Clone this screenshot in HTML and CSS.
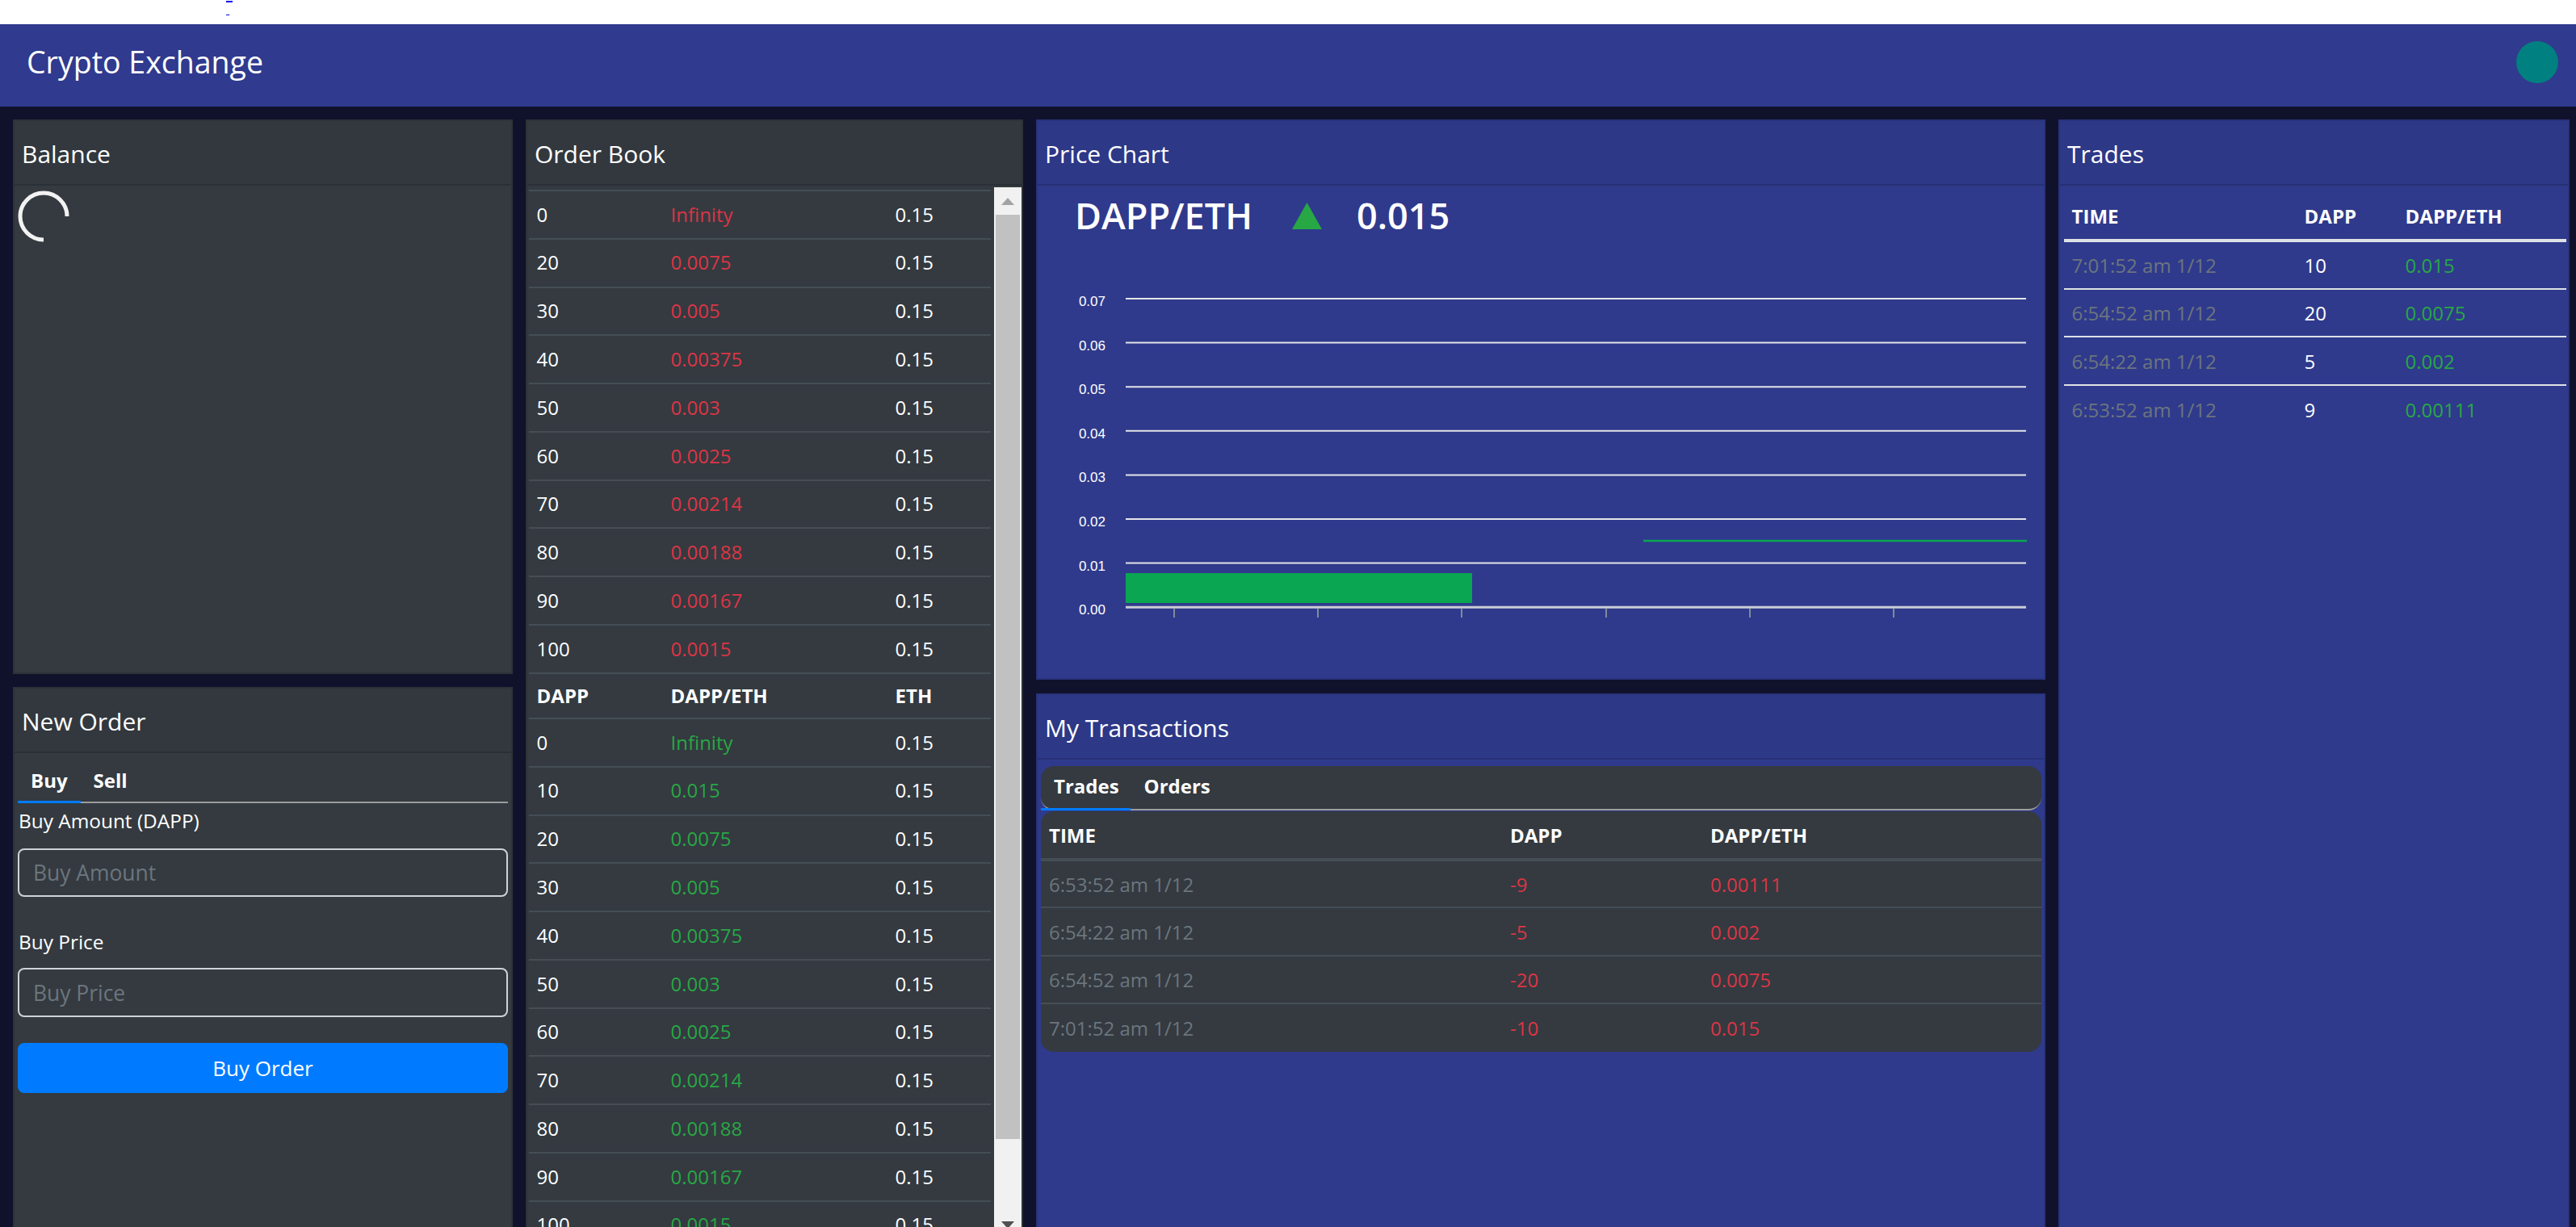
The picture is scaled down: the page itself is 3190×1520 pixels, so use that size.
FILE: index.html
```html
<!DOCTYPE html>
<html lang="en">
<head>
<meta charset="utf-8">
<title>Crypto Exchange</title>
<link rel="stylesheet" href="styles.css">
</head>
<body>
<div class="topbar"><a class="toplink" href="#">&nbsp;</a></div>
<nav class="navbar">
  <span class="brand">Crypto Exchange</span>
  <span class="avatar"></span>
</nav>
<main class="content">
  <div class="stack stack-left">
    <section class="card card-dark balance">
      <div class="card-header">Balance</div>
      <div class="card-body balance-body">
        <svg class="spinner" width="64" height="64" viewBox="0 0 64 64"><path d="M61 32 A29 29 0 1 0 32 61" fill="none" stroke="#f2f2f2" stroke-width="5"/></svg>
      </div>
    </section>
    <section class="card card-dark new-order">
      <div class="card-header">New Order</div>
      <div class="card-body order-body">
        <div class="order-tabs">
          <span class="order-tab active">Buy</span>
          <span class="order-tab">Sell</span>
        </div>
        <label class="field-label label-first">Buy Amount (DAPP)</label>
        <input class="field field-first" type="text" placeholder="Buy Amount">
        <label class="field-label label-second">Buy Price</label>
        <input class="field field-second" type="text" placeholder="Buy Price">
        <button class="btn-buy" type="button">Buy Order</button>
      </div>
    </section>
  </div>

  <section class="card card-dark order-book">
    <div class="card-header">Order Book</div>
    <div class="card-body book-body">
      <div class="book-scroll">
        <table class="book-table">
          <colgroup><col class="bc1"><col class="bc2"><col class="bc3"></colgroup>
          <tbody>
            <tr><td>0</td><td class="red">Infinity</td><td>0.15</td></tr>
            <tr><td>20</td><td class="red">0.0075</td><td>0.15</td></tr>
            <tr><td>30</td><td class="red">0.005</td><td>0.15</td></tr>
            <tr><td>40</td><td class="red">0.00375</td><td>0.15</td></tr>
            <tr><td>50</td><td class="red">0.003</td><td>0.15</td></tr>
            <tr><td>60</td><td class="red">0.0025</td><td>0.15</td></tr>
            <tr><td>70</td><td class="red">0.00214</td><td>0.15</td></tr>
            <tr><td>80</td><td class="red">0.00188</td><td>0.15</td></tr>
            <tr><td>90</td><td class="red">0.00167</td><td>0.15</td></tr>
            <tr><td>100</td><td class="red">0.0015</td><td>0.15</td></tr>
            <tr class="book-head"><th>DAPP</th><th>DAPP/ETH</th><th>ETH</th></tr>
            <tr><td>0</td><td class="green">Infinity</td><td>0.15</td></tr>
            <tr><td>10</td><td class="green">0.015</td><td>0.15</td></tr>
            <tr><td>20</td><td class="green">0.0075</td><td>0.15</td></tr>
            <tr><td>30</td><td class="green">0.005</td><td>0.15</td></tr>
            <tr><td>40</td><td class="green">0.00375</td><td>0.15</td></tr>
            <tr><td>50</td><td class="green">0.003</td><td>0.15</td></tr>
            <tr><td>60</td><td class="green">0.0025</td><td>0.15</td></tr>
            <tr><td>70</td><td class="green">0.00214</td><td>0.15</td></tr>
            <tr><td>80</td><td class="green">0.00188</td><td>0.15</td></tr>
            <tr><td>90</td><td class="green">0.00167</td><td>0.15</td></tr>
            <tr><td>100</td><td class="green">0.0015</td><td>0.15</td></tr>
          </tbody>
        </table>
      </div>
      <div class="scrollbar">
        <div class="sb-btn"><svg width="16" height="9" viewBox="0 0 16 9"><path d="M8 0 L16 9 L0 9 Z" fill="#a3a3a3"/></svg></div>
        <div class="sb-thumb"></div>
        <div class="sb-track"></div>
        <div class="sb-btn"><svg width="16" height="9" viewBox="0 0 16 9"><path d="M0 0 L16 0 L8 9 Z" fill="#505050"/></svg></div>
      </div>
    </div>
  </section>

  <div class="stack stack-mid">
    <section class="card card-blue price-chart">
      <div class="card-header">Price Chart</div>
      <div class="card-body chart-body">
        <h2 class="pair">
          <span class="pair-name">DAPP/ETH</span>
          <svg class="pair-arrow" width="37" height="33" viewBox="0 0 37 33"><path d="M18.5 0 L37 33 L0 33 Z" fill="#28a745"/></svg>
          <span class="pair-price">0.015</span>
        </h2>
        <svg class="chart" width="1246" height="500" viewBox="0 0 1246 500">
          <g stroke="#e4e4e8" stroke-width="2">
            <line x1="109" y1="70" x2="1224" y2="70"/>
            <line x1="109" y1="124.6" x2="1224" y2="124.6"/>
            <line x1="109" y1="179.2" x2="1224" y2="179.2"/>
            <line x1="109" y1="233.8" x2="1224" y2="233.8"/>
            <line x1="109" y1="288.4" x2="1224" y2="288.4"/>
            <line x1="109" y1="343" x2="1224" y2="343"/>
            <line x1="109" y1="397.6" x2="1224" y2="397.6"/>
          </g>
          <line x1="109" y1="452.2" x2="1224" y2="452.2" stroke="#c9ccd3" stroke-width="3"/>
          <g fill="#ffffff" font-family="Liberation Sans, Arial, sans-serif" font-size="17" text-anchor="end">
            <text x="84" y="79">0.07</text>
            <text x="84" y="133.6">0.06</text>
            <text x="84" y="188.2">0.05</text>
            <text x="84" y="242.8">0.04</text>
            <text x="84" y="297.4">0.03</text>
            <text x="84" y="352">0.02</text>
            <text x="84" y="406.6">0.01</text>
            <text x="84" y="461.2">0.00</text>
          </g>
          <rect x="109" y="410" width="429" height="37" fill="#0aa651"/>
          <line x1="750" y1="370" x2="1225" y2="370" stroke="#0aa651" stroke-width="2.5"/>
          <g stroke="#7f8c96" stroke-width="2">
            <line x1="169" y1="454" x2="169" y2="465"/>
            <line x1="347" y1="454" x2="347" y2="465"/>
            <line x1="525" y1="454" x2="525" y2="465"/>
            <line x1="704" y1="454" x2="704" y2="465"/>
            <line x1="882" y1="454" x2="882" y2="465"/>
            <line x1="1060" y1="454" x2="1060" y2="465"/>
          </g>
        </svg>
      </div>
    </section>
    <section class="card card-blue my-tx">
      <div class="card-header">My Transactions</div>
      <div class="card-body tx-body">
        <div class="tx-tabs">
          <span class="tx-tab active">Trades</span>
          <span class="tx-tab">Orders</span>
        </div>
        <div class="tx-table-wrap">
          <table class="tx-table">
            <colgroup><col class="tc1"><col class="tc2"><col class="tc3"></colgroup>
            <thead><tr><th>TIME</th><th>DAPP</th><th>DAPP/ETH</th></tr></thead>
            <tbody>
              <tr><td class="muted">6:53:52 am 1/12</td><td class="red">-9</td><td class="red">0.00111</td></tr>
              <tr><td class="muted">6:54:22 am 1/12</td><td class="red">-5</td><td class="red">0.002</td></tr>
              <tr><td class="muted">6:54:52 am 1/12</td><td class="red">-20</td><td class="red">0.0075</td></tr>
              <tr><td class="muted">7:01:52 am 1/12</td><td class="red">-10</td><td class="red">0.015</td></tr>
            </tbody>
          </table>
        </div>
      </div>
    </section>
  </div>

  <section class="card card-blue trades">
    <div class="card-header">Trades</div>
    <div class="card-body trades-body">
      <table class="trades-table">
        <colgroup><col class="rc1"><col class="rc2"><col class="rc3"></colgroup>
        <thead><tr><th>TIME</th><th>DAPP</th><th>DAPP/ETH</th></tr></thead>
        <tbody>
          <tr><td class="muted">7:01:52 am 1/12</td><td>10</td><td class="green">0.015</td></tr>
          <tr><td class="muted">6:54:52 am 1/12</td><td>20</td><td class="green">0.0075</td></tr>
          <tr><td class="muted">6:54:22 am 1/12</td><td>5</td><td class="green">0.002</td></tr>
          <tr><td class="muted">6:53:52 am 1/12</td><td>9</td><td class="green">0.00111</td></tr>
        </tbody>
      </table>
    </div>
  </section>
</main>
</body>
</html>
```

FILE: styles.css
```css
* { box-sizing: border-box; }

html, body {
  margin: 0;
  height: 100%;
  overflow: hidden;
}

body {
  background: #10122b;
  color: #ffffff;
  font-family: "Open Sans", "Noto Sans", sans-serif;
}

/* top white strip */
.topbar {
  height: 30px;
  background: #ffffff;
  overflow: hidden;
}
.toplink {
  display: block;
  width: 8px;
  height: 3px;
  margin-left: 280px;
  border-bottom: 2px solid #0000ee;
}

/* navbar */
.navbar {
  height: 102px;
  background: #303a8e;
  display: flex;
  align-items: center;
  justify-content: space-between;
  padding: 0 22px 9px 33px;
}
.brand {
  font-size: 37.5px;
  line-height: 56px;
}
.avatar {
  width: 52px;
  height: 52px;
  border-radius: 50%;
  background: #008080;
}

/* main grid */
.content {
  height: calc(100vh - 132px);
  overflow: hidden;
  display: grid;
  grid-template-columns: 619px 616px 1250px 633px;
  grid-template-rows: 1400px;
  column-gap: 16px;
  padding: 16px 0 0 16px;
}

.stack {
  display: flex;
  flex-direction: column;
  min-height: 0;
}
.stack-left { gap: 16px; }
.stack-mid { gap: 17px; }

.card {
  display: flex;
  flex-direction: column;
  min-height: 0;
  overflow: hidden;
  border: 2px solid rgba(0, 0, 0, 0.12);
}
.card-dark { background: #343a40; }
.card-blue { background: #2f3a8c; }

.card-header {
  flex: none;
  height: 80px;
  padding: 3px 9px 0;
  font-size: 30px;
  line-height: 75px;
  background: rgba(0, 0, 0, 0.03);
  border-bottom: 2px solid rgba(0, 0, 0, 0.13);
}
.card-body {
  flex: 1;
  min-height: 0;
}

.red { color: #dc3545; }
.green { color: #28a745; }
.muted { color: #6c757d; }

/* balance */
.balance { height: 687px; flex: none; }
.balance-body { padding: 6px 4px; }
.spinner { display: block; }

/* new order */
.new-order { flex: 1; }
.order-body {
  display: flex;
  flex-direction: column;
  padding: 0 4px;
}
.order-tabs {
  display: flex;
  padding-top: 8px;
  border-bottom: 2px solid #9c9c9c;
}
.order-tab {
  padding: 0 16px;
  font-size: 24px;
  font-weight: 700;
  line-height: 51px;
  border-bottom: 3px solid transparent;
  margin-bottom: -2px;
}
.order-tab.active { border-bottom-color: #007bff; }

.field-label {
  font-size: 24.4px;
  line-height: 39px;
  padding-left: 1px;
}
.label-first { margin-top: 1.5px; }
.label-second { margin-top: 35.5px; }

.field {
  height: 60px;
  border: 2px solid #cfd2d6;
  border-radius: 8px;
  background: transparent;
  color: #ffffff;
  font-family: inherit;
  font-size: 26.4px;
  padding: 0 17px;
  outline: none;
}
.field::placeholder { color: #6c757d; }
.field-first { margin-top: 15.5px; }
.field-second { margin-top: 13.5px; height: 61px; }

.btn-buy {
  margin-top: 32px;
  height: 62px;
  border: none;
  border-radius: 8px;
  background: #007bff;
  color: #ffffff;
  font-family: inherit;
  font-size: 26px;
}

/* order book */
.book-body {
  display: flex;
  align-items: flex-start;
}
.book-scroll {
  flex: 1;
  height: 100%;
  overflow: hidden;
  padding: 5px 4px 0 2px;
}
.book-table {
  width: 572px;
  border-collapse: collapse;
  table-layout: fixed;
  font-size: 24px;
}
.bc1 { width: 166px; }
.bc2 { width: 278px; }
.bc3 { width: 128px; }
.book-table td,
.book-table th {
  padding: 9.6px;
  line-height: 38.6px;
  border-top: 2px solid #454d55;
  text-align: left;
  white-space: nowrap;
}
.book-table td { font-weight: 400; }
.book-head th {
  font-weight: 700;
  line-height: 35px;
}

.scrollbar {
  flex: none;
  width: 34px;
  height: 1302px;
  margin-top: 2px;
  background: #f1f1f1;
  display: flex;
  flex-direction: column;
}
.sb-btn {
  height: 34px;
  flex: none;
  display: flex;
  align-items: center;
  justify-content: center;
}
.sb-btn svg { display: block; }
.sb-thumb {
  flex: none;
  height: 1145px;
  margin: 0 2px;
  background: #c1c1c1;
}
.sb-track { flex: 1; }

/* price chart */
.price-chart { height: 694px; flex: none; }
.pair {
  display: flex;
  align-items: baseline;
  margin: 9px 0 0 46px;
  font-size: 45px;
  font-weight: 600;
  line-height: 55px;
}
.pair-name { width: 269px; }
.pair-arrow { display: block; margin-right: 43px; }
.chart {
  display: block;
  margin-top: 6px;
}

/* my transactions */
.my-tx { flex: 1; }
.tx-body { padding: 8px 3px 0 4px; }
.tx-tabs {
  display: flex;
  height: 55px;
  background: #343a40;
  border-radius: 16px;
  border-bottom: 2px solid #9c9c9c;
}
.tx-tab {
  font-size: 24px;
  font-weight: 700;
  line-height: 50px;
  border-bottom: 3px solid transparent;
  margin-bottom: -2px;
}
.tx-tab:first-child { padding: 0 14px 0 16px; }
.tx-tab + .tx-tab { padding: 0 16px 0 17px; }
.tx-tab.active { border-bottom-color: #007bff; }

.tx-table-wrap {
  margin-top: 1px;
  background: #343a40;
  border-radius: 16px;
  overflow: hidden;
}
.tx-table {
  width: 100%;
  border-collapse: collapse;
  table-layout: fixed;
  font-size: 24px;
}
.tc1 { width: 571px; }
.tc2 { width: 248px; }
.tc3 { width: auto; }
.tx-table th,
.tx-table td {
  text-align: left;
  padding: 0 10px;
  white-space: nowrap;
}
.tx-table th {
  height: 60px;
  font-weight: 700;
  border-bottom: 4px solid #454d55;
}
.tx-table td {
  height: 59.4px;
  border-top: 2px solid #454d55;
}
.tx-table tbody tr:first-child td { border-top: none; }

/* trades */
.trades-body { padding: 8px 2px 0 5px; }
.trades-table {
  width: 622px;
  border-collapse: collapse;
  table-layout: fixed;
  font-size: 24px;
}
.rc1 { width: 288px; }
.rc2 { width: 125px; }
.rc3 { width: 209px; }
.trades-table th,
.trades-table td {
  text-align: left;
  padding: 0 9.6px;
  white-space: nowrap;
}
.trades-table th {
  height: 60px;
  font-weight: 700;
  border-bottom: 4px solid #dee2e6;
}
.trades-table td {
  height: 59.7px;
  border-top: 2px solid #dee2e6;
}
.trades-table tbody tr:first-child td { border-top: none; }
```
